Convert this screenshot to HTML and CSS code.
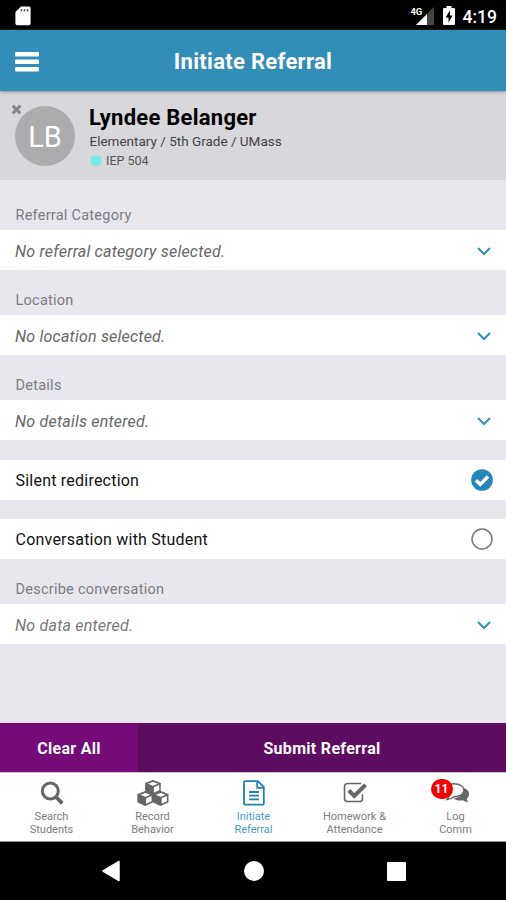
FILE: index.html
```html
<!DOCTYPE html>
<html lang="en">
<head>
<meta charset="utf-8">
<title>Initiate Referral</title>
<link rel="stylesheet" href="styles.css">
</head>
<body>
<div class="phone">
  <div class="status">
    <svg class="sd" width="16" height="20" viewBox="0 0 16 20"><path d="M6 .5h8a1.600 1.600 0 0 1 1.600 1.600v15.300a1.800 1.800 0 0 1-1.800 1.800H2.200a1.800 1.800 0 0 1-1.800-1.800V6z" fill="#fff"/><path d="M6.500 3v2.500M9.500 3v2.500M12.500 3v2.500" stroke="#555" stroke-width="1.500"/></svg>
    <div class="signal"><span class="net">4G</span><svg width="18" height="18" viewBox="0 0 18 18"><path d="M18 0v18H0z" fill="#444"/><path d="M11 7v11H0z" fill="#fff"/></svg></div>
    <svg class="battery" width="12" height="19" viewBox="0 0 12 19"><path d="M3.500 0h5v2H11a1 1 0 0 1 1 1v15a1 1 0 0 1-1 1H1a1 1 0 0 1-1-1V3a1 1 0 0 1 1-1h2.500z" fill="#fff"/><path d="M7 4.500 2.500 11.500H5.500V16.500L9.700 9.500H7z" fill="#000"/></svg>
    <span class="clock">4:19</span>
  </div>
  <header class="bar">
    <svg class="menu" width="24" height="20" viewBox="0 0 24 20" fill="#fff"><rect y="0" width="24" height="4.500" rx="1"/><rect y="7.500" width="24" height="4.500" rx="1"/><rect y="15" width="24" height="4.500" rx="1"/></svg>
    <h1>Initiate Referral</h1>
  </header>
  <section class="student">
    <div class="avatar">LB
      <svg class="remove" width="11" height="11" viewBox="0 0 11 11"><path d="M1.700 1.700l7.600 7.600M9.300 1.700L1.700 9.300" stroke="#88888b" stroke-width="3.200"/></svg>
    </div>
    <div class="info">
      <h2>Lyndee Belanger</h2>
      <p class="meta">Elementary / 5th Grade / UMass</p>
      <p class="tags"><i class="dot"></i><span>IEP 504</span></p>
    </div>
  </section>
  <main class="form">
    <label class="first">Referral Category</label>
    <div class="row"><em>No referral category selected.</em><svg class="chev" width="14" height="9" viewBox="0 0 14 9"><path d="M1 1l6 6 6-6"/></svg></div>
    <label>Location</label>
    <div class="row"><em>No location selected.</em><svg class="chev" width="14" height="9" viewBox="0 0 14 9"><path d="M1 1l6 6 6-6"/></svg></div>
    <label>Details</label>
    <div class="row"><em>No details entered.</em><svg class="chev" width="14" height="9" viewBox="0 0 14 9"><path d="M1 1l6 6 6-6"/></svg></div>
    <div class="row option"><span>Silent redirection</span><svg width="22" height="22" viewBox="0 0 22 22"><circle cx="11" cy="11" r="10.800" fill="#2587b8"/><path d="M5 11.200l4.300 4.200 7.700-7.800" fill="none" stroke="#fff" stroke-width="3.500"/></svg></div>
    <div class="row option"><span>Conversation with Student</span><svg width="22" height="22" viewBox="0 0 22 22"><circle cx="11" cy="11" r="10" fill="#fff" stroke="#777" stroke-width="1.500"/></svg></div>
    <label>Describe conversation</label>
    <div class="row"><em class="pale">No data entered.</em><svg class="chev" width="14" height="9" viewBox="0 0 14 9"><path d="M1 1l6 6 6-6"/></svg></div>
  </main>
  <div class="actions"><button class="clear">Clear All</button><button class="submit">Submit Referral</button></div>
  <nav class="tabs">
    <a><svg width="24" height="24" viewBox="0 0 24 24" fill="none" stroke="#666"><circle cx="10.300" cy="10" r="8" stroke-width="3"/><path d="M16 16l6.300 6.300" stroke-width="3.800"/></svg><span>Search<br>Students</span></a>
    <a><svg width="32" height="26" viewBox="0 0 32 26" fill="#fff" stroke="#666" stroke-width="1.500" stroke-linejoin="round"><g id="cube"><path d="M16 1l7 2.800v7l-7 3.200-7-3.200v-7z"/><path d="M9 3.800l7 3V14l-7-3.200z" fill="#666"/><path d="M9 3.800L16 1l7 2.800-7 3z"/><path d="M16 6.800V14" fill="none"/></g><use href="#cube" x="-7.700" y="11"/><use href="#cube" x="7.700" y="11"/></svg><span>Record<br>Behavior</span></a>
    <a class="active"><svg width="22" height="26" viewBox="0 0 22 26" fill="none" stroke="#2182b3" stroke-width="1.800" stroke-linejoin="round"><path d="M2 1.200h12.800L20.800 7v16.700a1 1 0 0 1-1 1H2a1 1 0 0 1-1-1V2.200a1 1 0 0 1 1-1z"/><path d="M14.200 1.500V7.800h6.500M6 12h10M6 15.700h10M6 19.400h10"/></svg><span>Initiate<br>Referral</span></a>
    <a><svg width="24" height="24" viewBox="0 0 24 24" fill="none" stroke="#666"><path d="M18 2.500H4.500a3 3 0 0 0-3 3v12a3 3 0 0 0 3 3h12a3 3 0 0 0 3-3v-4" stroke-width="1.600"/><path d="M5.800 9.500l5.500 5.500L22.500 3.800" stroke-width="4"/></svg><span>Homework &amp;<br>Attendance</span></a>
    <a><div class="chat"><svg width="28" height="24" viewBox="0 0 28 24"><path d="M22 8c3 1 5 3.200 5 6 0 2-1 3.600-2.400 4.800.3 1.300 1 2 1.800 3-2.500 0-4-.7-5.400-1.600-3.500.8-7 .1-9.500-2C17 18.300 22 15 22 8z" fill="#666"/><path d="M12 3.700c6 0 10 2.900 10 6.600S18 16.800 12 16.800c-2 1.700-4 2.700-7 2.700 1-1 1.700-2 1.800-3.700C3.500 15 1.500 13 1.500 10.500 1.500 6.600 6 3.700 12 3.700z" fill="#fff" stroke="#666" stroke-width="1.500"/></svg><b class="badge">11</b></div><span>Log<br>Comm</span></a>
  </nav>
  <div class="sysnav">
    <div><svg width="18" height="22" viewBox="0 0 18 22"><path d="M17 1.500v19L1 11z" fill="#fff" stroke="#fff" stroke-width="1.500" stroke-linejoin="round"/></svg></div>
    <div><i class="home"></i></div>
    <div><i class="recent"></i></div>
  </div>
</div>
</body>
</html>
```

FILE: styles.css
```css
* { box-sizing: border-box; }
body { margin: 0; font-family: Roboto, sans-serif; background: #000; }
h1, h2, p { margin: 0; }
svg { display: block; flex: none; }
.phone { width: 506px; height: 900px; display: flex; flex-direction: column; background: #e8e7ed; overflow: hidden; }
.status { height: 30px; flex: none; background: #000; color: #fff; display: flex; align-items: center; padding: 1px 9px 0 15px; }
.signal { display: flex; margin-left: auto; position: relative; padding-left: 5px; }
.net { position: absolute; left: 0; top: 0; font-size: 9.500px; line-height: 9px; font-weight: 700; letter-spacing: -.3px; background: #000; border-radius: 0 0 4px 0; }
.battery { margin-left: 9px; }
.clock { font-size: 17.500px; font-weight: 500; margin-left: 8px; line-height: 28px; position: relative; top: 1px; }
.bar { height: 61px; flex: none; background: #338db9; display: grid; grid-template-columns: 1fr auto 1fr; align-items: center; padding: 2px 15px 0; box-shadow: 0 1px 3px #8b8b92; position: relative; }
.bar h1 { color: #fff; font-size: 22px; font-weight: 700; letter-spacing: .3px; grid-column: 2; }
.student { height: 89px; flex: none; background: #d8d7dc; display: flex; padding: 15px 15px 0; }
.avatar { width: 60px; height: 60px; border-radius: 50%; background: #acacae; color: #fff; font-size: 29px; line-height: 62px; text-align: center; position: relative; }
.remove { position: absolute; left: -4px; top: -2px; }
.info { margin-left: 14px; }
.info h2 { font-size: 22px; line-height: 26px; font-weight: 700; letter-spacing: .25px; margin-top: -1px; color: #000; }
.meta { font-size: 13.500px; line-height: 18px; margin-top: 1px; color: #444; padding-left: .5px; }
.tags { display: flex; align-items: center; font-size: 12.500px; line-height: 21px; color: #555; }
.dot { width: 10px; height: 10px; border-radius: 3px; background: #74eee3; margin: 0 5px 0 2px; }
.form { flex: 1; }
label { display: block; height: 45px; padding: 21px 15px 0 15.500px; font-size: 14.500px; line-height: 20px; letter-spacing: .25px; color: #7b7b80; }
label.first { height: 50px; padding-top: 26px; }
.row { height: 40px; background: #fff; display: flex; align-items: center; justify-content: space-between; padding: 2px 14px 0 15px; font-size: 16px; letter-spacing: .22px; color: #111; }
.row em { color: #666; }
.row em.pale { color: #777; }
.chev { margin: 0 1px 0 0; fill: none; stroke: #2e8fc0; stroke-width: 2; }
.option { margin-top: 19.500px; padding-top: 0; padding-right: 13px; padding-left: 15.500px; }
.option span { padding-top: 1px; }
.actions { height: 49px; flex: none; display: flex; }
button { border: 0; padding: 2px 0 0; font: 700 16px Roboto, sans-serif; letter-spacing: .3px; color: #fff; }
.clear { width: 138px; background: #740b78; }
.submit { flex: 1; background: #5e0c60; }
.tabs { height: 70px; flex: none; background: #fff; display: flex; border-top: 1px solid #c9c2cb; border-bottom: 1px solid #999; padding-left: 1px; }
.tabs a { flex: 1; display: flex; flex-direction: column; align-items: center; font-size: 11px; line-height: 13px; text-align: center; color: #7d7d7d; }
.tabs a > svg, .chat { height: 26px; margin: 7px 0 4px; }
.tabs a.active { color: #4d9bc4; }
.chat { position: relative; }
.badge { position: absolute; left: -11px; top: -1px; width: 22px; height: 20px; border-radius: 10px; background: #f50000; color: #fff; font-size: 12px; line-height: 20px; }
.sysnav { height: 58px; flex: none; background: #000; display: flex; padding: 0 38px 0 39px; }
.sysnav div { flex: 1; display: flex; align-items: center; justify-content: center; }
.home { width: 20px; height: 20px; border-radius: 50%; background: #fff; }
.recent { width: 19px; height: 19px; border-radius: 1px; background: #fff; }
```
